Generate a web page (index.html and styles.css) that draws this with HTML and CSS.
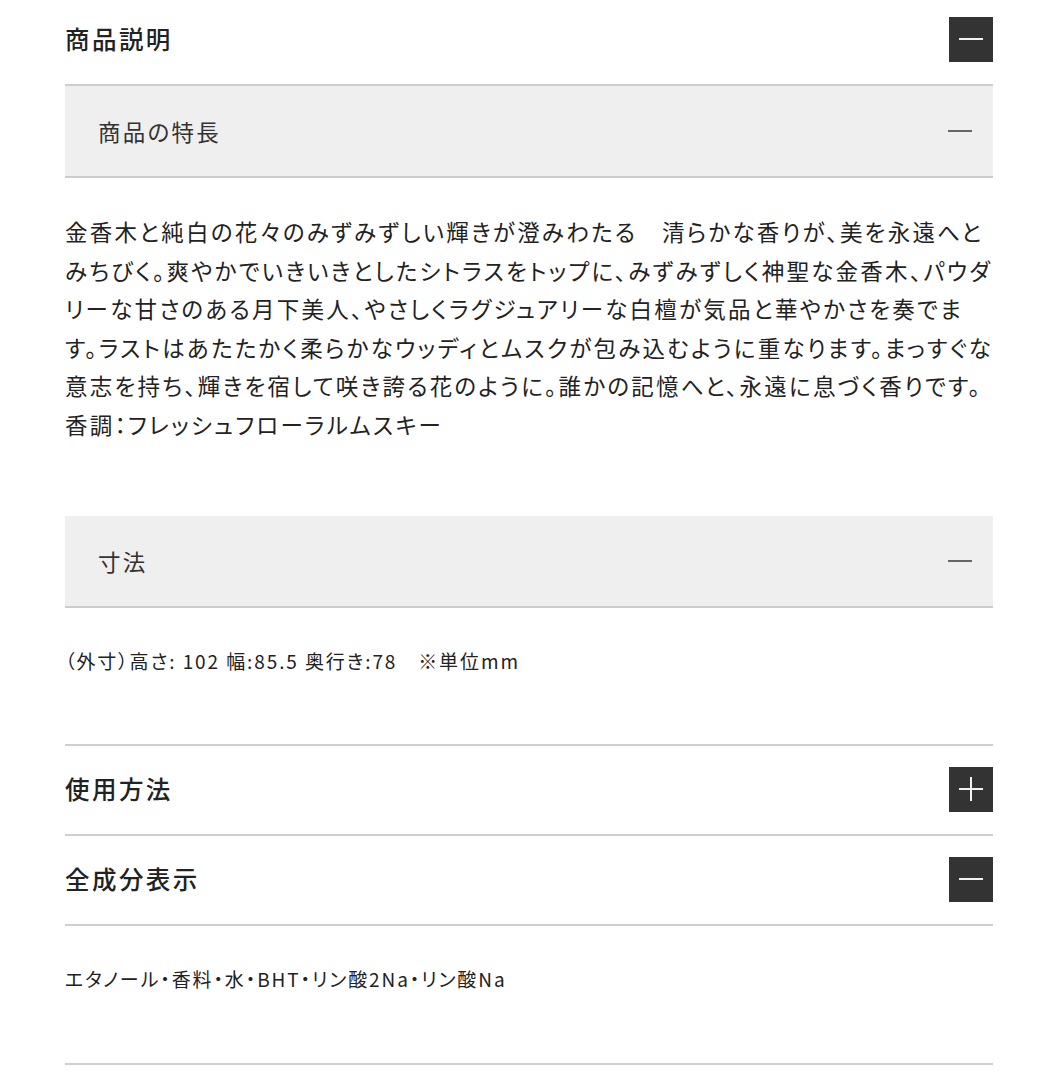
FILE: index.html
```html
<!DOCTYPE html>
<html lang="ja">
<head>
<meta charset="utf-8">
<title>商品説明</title>
<link rel="stylesheet" href="styles.css">
</head>
<body>
<div class="page">
  <section class="acc acc-open">
    <div class="acc-head acc-head-first">
      <h2 class="acc-title">商品説明</h2>
      <span class="toggle"><span class="bar"></span></span>
    </div>
    <div class="acc-body">
      <div class="sub-head">
        <h3 class="sub-title">商品の特長</h3>
        <span class="sub-minus"></span>
      </div>
      <div class="sub-body sub-body-long">
        <p class="text text-lines">金香木と純白の花々のみずみずしい輝きが澄みわたる　清らかな香りが、美を永遠へと<br>みちびく。爽やかでいきいきとしたシトラスをトップに、みずみずしく神聖な金香木、パウダ<br>リーな甘さのある月下美人、やさしくラグジュアリーな白檀が気品と華やかさを奏でま<br>す。ラストはあたたかく柔らかなウッディとムスクが包み込むように重なります。まっすぐな<br>意志を持ち、輝きを宿して咲き誇る花のように。誰かの記憶へと、永遠に息づく香りです。<br>香調：フレッシュフローラルムスキー</p>
      </div>
      <div class="sub-head">
        <h3 class="sub-title">寸法</h3>
        <span class="sub-minus"></span>
      </div>
      <div class="sub-body">
        <p class="text text-small">（外寸）高さ: 102 幅:85.5 奥行き:78　※単位mm</p>
      </div>
    </div>
  </section>
  <section class="acc">
    <div class="acc-head">
      <h2 class="acc-title">使用方法</h2>
      <span class="toggle"><span class="bar"></span><span class="bar bar-v"></span></span>
    </div>
  </section>
  <section class="acc acc-open">
    <div class="acc-head">
      <h2 class="acc-title">全成分表示</h2>
      <span class="toggle"><span class="bar"></span></span>
    </div>
    <div class="acc-body">
      <div class="sub-body">
        <p class="text text-small">エタノール・香料・水・BHT・リン酸2Na・リン酸Na</p>
      </div>
    </div>
  </section>
</div>
</body>
</html>
```

FILE: styles.css
```css
html, body {
  margin: 0;
  padding: 0;
  background: #fff;
}
body {
  font-family: "Noto Sans CJK JP", "Noto Sans", sans-serif;
  color: #222;
  font-feature-settings: "palt";
}
.page {
  margin: 0 65px;
}
.acc-head {
  display: flex;
  align-items: center;
  justify-content: space-between;
  padding: 21px 0 22px;
  border-bottom: 2px solid #cfcfcf;
}
.acc-head-first {
  padding-top: 17px;
}
.acc-title {
  margin: 0;
  font-size: 24.5px;
  font-weight: 500;
  letter-spacing: 0.1em;
  line-height: 1;
}
.toggle {
  position: relative;
  width: 44px;
  height: 45px;
  background: #333;
  flex: none;
}
.bar {
  position: absolute;
  left: 10px;
  top: 21px;
  width: 24px;
  height: 2px;
  background: #f2f2f2;
}
.bar-v {
  left: 21px;
  top: 10px;
  width: 2px;
  height: 24px;
}
.acc-open .acc-body {
  border-bottom: 2px solid #cfcfcf;
}
.sub-head {
  display: flex;
  align-items: center;
  justify-content: space-between;
  height: 90px;
  padding: 0 21px 0 33px;
  background: #efefef;
  border-bottom: 2px solid #cccccc;
}
.sub-title {
  margin: 0;
  font-size: 22.5px;
  font-weight: 400;
  letter-spacing: 0.1em;
  color: #333;
}
.sub-minus {
  width: 24px;
  height: 2px;
  background: #666;
}
.sub-body {
  padding: 34px 0 64px;
}
.sub-body-long {
  padding-bottom: 72px;
}
.text {
  margin: 0;
  font-size: 22.5px;
  line-height: 38.6px;
  letter-spacing: 0.1em;
}
.text-lines {
  white-space: nowrap;
}
.text-small {
  font-size: 19px;
}
```
